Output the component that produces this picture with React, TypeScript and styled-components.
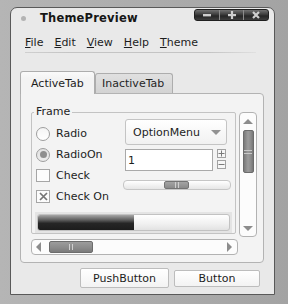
import styled, { createGlobalStyle, css } from "styled-components"

type Dir = "up" | "down" | "left" | "right"

const GlobalStyle = createGlobalStyle`
  * { box-sizing: border-box; }
  html, body { margin: 0; padding: 0; }
  body {
    width: 288px;
    height: 304px;
    overflow: hidden;
    background: linear-gradient(90deg, #b5b5b5, #a3a3a3);
    font-family: "DejaVu Sans", "Liberation Sans", sans-serif;
    font-size: 11px;
    color: #1d1d1d;
  }
`

const Desktop = styled.div`
  padding: 7px 0 0 10px;
`

const Window = styled.div`
  width: 265px;
  height: 288px;
  display: flex;
  flex-direction: column;
  background: #e9e9e9;
  border: 1px solid #595959;
  border-radius: 7px 7px 0 0;
`

const TitleBar = styled.div`
  height: 20px;
  display: flex;
  align-items: center;
  padding: 0 5px 0 10px;
`

const Dot = styled.span`
  width: 5px;
  height: 5px;
  border-radius: 50%;
  background: #b3b3b3;
  margin-right: 14px;
`

const Title = styled.span`
  font-weight: bold;
  font-size: 11.5px;
  letter-spacing: 0.2px;
  color: #161616;
`

const WinButtons = styled.div`
  margin-left: auto;
  align-self: flex-start;
  margin-top: 1px;
  width: 75px;
  height: 12px;
  display: flex;
  border: 1px solid #1f1f1f;
  border-radius: 3px;
  background: linear-gradient(#727272, #3c3c3c 45%, #262626 60%, #3e3e3e);
  overflow: hidden;
`

const WinButton = styled.span`
  flex: 1;
  display: flex;
  align-items: center;
  justify-content: center;
  & + & { border-left: 1px solid #8c8c8c; }
`

const MenuBar = styled.div`
  display: flex;
  gap: 11px;
  padding: 8px 0 3px 14px;
  line-height: 13px;
  u { text-underline-offset: 1px; }
`

const Separator = styled.div`
  height: 1px;
  margin: 0 18px 0 14px;
  background: linear-gradient(90deg, #cfcfcf, #c4c4c4 20%, #c4c4c4 80%, #e0e0e0);
`

const Notebook = styled.div`
  margin: 18px 10px 0 9px;
`

const TabRow = styled.div`
  height: 22px;
  display: flex;
  align-items: flex-end;
`

const Tab = styled.div<{ $active?: boolean }>`
  display: flex;
  align-items: center;
  border: 1px solid #adadad;
  border-bottom: none;
  border-radius: 3px 3px 0 0;
  ${p => p.$active ? css`
    width: 75px;
    height: 23px;
    margin-bottom: -1px;
    padding-left: 10px;
    background: linear-gradient(#fafafa, #f3f3f3 30%);
    position: relative;
    z-index: 1;
  ` : css`
    width: 78px;
    height: 20px;
    padding-left: 6px;
    background: linear-gradient(#e0e0e0, #d3d3d3);
    color: #262626;
  `}
`

const Pane = styled.div`
  height: 170px;
  display: grid;
  grid-template-columns: 207px 18px;
  grid-template-rows: 125px 16px;
  column-gap: 1px;
  row-gap: 2px;
  padding: 18px 6px 7px 10px;
  background: #f3f3f3;
  border: 1px solid #b3b3b3;
  border-radius: 0 4px 4px 4px;
`

const GroupBox = styled.div`
  position: relative;
  width: 205px;
  height: 122px;
  border: 1px solid #c3c3c3;
  border-radius: 2px;
  padding: 6px 4px 0 4px;
  display: flex;
  flex-direction: column;
`

const Legend = styled.span`
  position: absolute;
  top: -8px;
  left: 2px;
  padding: 0 2px;
  line-height: 13px;
  background: #f3f3f3;
`

const Columns = styled.div`
  display: flex;
  height: 88px;
`

const LeftCol = styled.div`
  width: 87px;
  padding-top: 4px;
  display: flex;
  flex-direction: column;
`

const Option = styled.div`
  height: 21px;
  display: flex;
  align-items: center;
  gap: 6px;
`

const Radio = styled.span<{ $on?: boolean }>`
  width: 14px;
  height: 14px;
  border-radius: 50%;
  border: 1px solid #9e9e9e;
  display: flex;
  align-items: center;
  justify-content: center;
  background: ${p => p.$on ? "linear-gradient(#e2e2e2, #ececec)" : "linear-gradient(#f4f4f4, #ffffff)"};
  &::after {
    content: "";
    display: ${p => p.$on ? "block" : "none"};
    width: 7px;
    height: 7px;
    border-radius: 50%;
    background: #8e8e8e;
  }
`

const Check = styled.span`
  width: 14px;
  height: 13px;
  border: 1px solid #a6a6a6;
  background: #fcfcfc;
  display: flex;
  align-items: center;
  justify-content: center;
`

const RightCol = styled.div`
  flex: 1;
  display: flex;
  flex-direction: column;
`

const OptionMenu = styled.div`
  height: 26px;
  margin: 0 4px 0 2px;
  display: flex;
  align-items: center;
  padding: 0 5px 0 7px;
  border: 1px solid #c4c4c4;
  border-radius: 3px;
  background: linear-gradient(#ffffff, #f1f1f1);
`

const SpinRow = styled.div`
  height: 22px;
  margin: 4px 0 0 2px;
  display: flex;
  gap: 4px;
`

const Entry = styled.div`
  width: 88px;
  display: flex;
  align-items: center;
  padding-left: 2px;
  border: 1px solid #a9a9a9;
  background: #ffffff;
`

const SpinButtons = styled.div`
  display: flex;
  flex-direction: column;
  gap: 2px;
`

const SpinButton = styled.span`
  width: 9px;
  height: 9px;
  display: flex;
  align-items: center;
  justify-content: center;
  border: 1px solid #a2a2a2;
  background: #f6f6f6;
`

const Slider = styled.div`
  height: 10px;
  margin-top: 9px;
  padding-left: 40px;
  display: flex;
  align-items: center;
  border: 1px solid #c6c6c6;
  border-radius: 4px;
  background: linear-gradient(#ffffff, #e6e6e6);
`

const SliderKnob = styled.span`
  width: 25px;
  height: 8px;
  display: flex;
  align-items: center;
  justify-content: center;
  border: 1px solid #747474;
  border-radius: 2px;
  background: linear-gradient(#a4a4a4, #8a8a8a);
`

const VGrip = styled.span`
  width: 4px;
  height: 6px;
  border-left: 1px solid #cfcfcf;
  border-right: 1px solid #cfcfcf;
`

const HGrip = styled.span`
  width: 8px;
  height: 4px;
  border-top: 1px solid #c9c9c9;
  border-bottom: 1px solid #c9c9c9;
`

const Progress = styled.div`
  height: 21px;
  margin: 5px -1px 0;
  padding: 2px;
  background: #e4e4e4;
`

const ProgressBar = styled.div`
  height: 17px;
  display: flex;
  border: 1px solid #c2c2c2;
  border-radius: 3px;
  overflow: hidden;
  background: linear-gradient(#ffffff, #f0f0f0 60%, #e2e2e2);
`

const ProgressFill = styled.div`
  height: 100%;
  background: linear-gradient(#a6a6a6, #5a5a5a 35%, #262626 55%, #1c1c1c);
`

const VScroll = styled.div`
  height: 125px;
  display: flex;
  flex-direction: column;
  align-items: center;
  padding: 6px 0 5px;
  border: 1px solid #b2b2b2;
  border-radius: 4px;
  background: #fcfcfc;
`

const VThumb = styled.span`
  width: 11px;
  height: 43px;
  margin-top: 6px;
  display: flex;
  align-items: center;
  justify-content: center;
  border: 1px solid #6c6c6c;
  border-radius: 2px;
  background: linear-gradient(90deg, #7a7a7a, #9c9c9c 45%, #8c8c8c 75%, #777777);
`

const HScroll = styled.div`
  height: 16px;
  display: flex;
  align-items: center;
  padding: 0 5px 0 4px;
  border: 1px solid #b2b2b2;
  border-radius: 4px;
  background: #fcfcfc;
`

const HThumb = styled.span`
  width: 44px;
  height: 12px;
  margin-left: 8px;
  display: flex;
  align-items: center;
  justify-content: center;
  border: 1px solid #6c6c6c;
  border-radius: 2px;
  background: linear-gradient(#9c9c9c, #8a8a8a 60%, #7a7a7a);
`

const Arrow = styled.span<{ $dir: Dir }>`
  width: 0;
  height: 0;
  border-style: solid;
  border-color: transparent;
  ${p => p.$dir === "up" && css`border-width: 0 5px 5px; border-bottom-color: #8c8c8c;`}
  ${p => p.$dir === "down" && css`border-width: 5px 5px 0; border-top-color: #8c8c8c; margin-top: auto;`}
  ${p => p.$dir === "left" && css`border-width: 5px 5px 5px 0; border-right-color: #8c8c8c;`}
  ${p => p.$dir === "right" && css`border-width: 5px 0 5px 5px; border-left-color: #8c8c8c; margin-left: auto;`}
`

const MenuArrow = styled.span`
  margin-left: auto;
  width: 0;
  height: 0;
  border-style: solid;
  border-color: transparent;
  border-width: 5px 5px 0;
  border-top-color: #929292;
`

const ButtonRow = styled.div`
  margin-top: auto;
  display: flex;
  justify-content: flex-end;
  align-items: center;
  gap: 5px;
  padding: 5px 14px 6px 0;
`

const PushButton = styled.button<{ $w: number; $h: number }>`
  width: ${p => p.$w}px;
  height: ${p => p.$h}px;
  padding: 0;
  font: inherit;
  color: #1d1d1d;
  border: 1px solid #bdbdbd;
  border-radius: 2px;
  background: linear-gradient(#ffffff, #f3f3f3);
`

const Glyph = ({ kind }: { kind: "min" | "max" | "close" }) => (
  <svg width="8" height="8" viewBox="0 0 8 8">
    {kind === "min" && <rect x="0" y="3" width="8" height="2.4" fill="#cfcfcf" />}
    {kind === "max" && (
      <>
        <rect x="0" y="3" width="8" height="2.2" fill="#cfcfcf" />
        <rect x="2.9" y="0" width="2.2" height="8" fill="#cfcfcf" />
      </>
    )}
    {kind === "close" && (
      <path d="M1 1 L7 7 M7 1 L1 7" stroke="#cfcfcf" strokeWidth="2.2" />
    )}
  </svg>
)

const CrossMark = () => (
  <svg width="9" height="9" viewBox="0 0 9 9">
    <path d="M1 1 L8 8 M8 1 L1 8" stroke="#757575" strokeWidth="1.7" />
  </svg>
)

const SpinGlyph = ({ plus }: { plus?: boolean }) => (
  <svg width="7" height="7" viewBox="0 0 7 7">
    <path d={plus ? "M0.5 3.5 H6.5 M3.5 0.5 V6.5" : "M0.5 3.5 H6.5"} stroke="#7a7a7a" strokeWidth="1" />
  </svg>
)

export default function App() {
  return (
    <>
      <GlobalStyle />
      <Desktop>
        <Window>
          <TitleBar>
            <Dot />
            <Title>ThemePreview</Title>
            <WinButtons>
              <WinButton><Glyph kind="min" /></WinButton>
              <WinButton><Glyph kind="max" /></WinButton>
              <WinButton><Glyph kind="close" /></WinButton>
            </WinButtons>
          </TitleBar>

          <MenuBar>
            <span><u>F</u>ile</span>
            <span><u>E</u>dit</span>
            <span><u>V</u>iew</span>
            <span><u>H</u>elp</span>
            <span><u>T</u>heme</span>
          </MenuBar>
          <Separator />

          <Notebook>
            <TabRow>
              <Tab $active>ActiveTab</Tab>
              <Tab>InactiveTab</Tab>
            </TabRow>
            <Pane>
              <GroupBox>
                <Legend>Frame</Legend>
                <Columns>
                  <LeftCol>
                    <Option><Radio />Radio</Option>
                    <Option><Radio $on />RadioOn</Option>
                    <Option><Check />Check</Option>
                    <Option><Check><CrossMark /></Check>Check On</Option>
                  </LeftCol>
                  <RightCol>
                    <OptionMenu>OptionMenu<MenuArrow /></OptionMenu>
                    <SpinRow>
                      <Entry>1</Entry>
                      <SpinButtons>
                        <SpinButton><SpinGlyph plus /></SpinButton>
                        <SpinButton><SpinGlyph /></SpinButton>
                      </SpinButtons>
                    </SpinRow>
                    <Slider>
                      <SliderKnob><VGrip /></SliderKnob>
                    </Slider>
                  </RightCol>
                </Columns>
                <Progress>
                  <ProgressBar>
                    <ProgressFill style={{ width: "50%" }} />
                  </ProgressBar>
                </Progress>
              </GroupBox>

              <VScroll>
                <Arrow $dir="up" />
                <VThumb><HGrip /></VThumb>
                <Arrow $dir="down" />
              </VScroll>

              <HScroll>
                <Arrow $dir="left" />
                <HThumb><VGrip /></HThumb>
                <Arrow $dir="right" />
              </HScroll>
            </Pane>
          </Notebook>

          <ButtonRow>
            <PushButton $w={89} $h={20}>PushButton</PushButton>
            <PushButton $w={86} $h={17}>Button</PushButton>
          </ButtonRow>
        </Window>
      </Desktop>
    </>
  )
}
